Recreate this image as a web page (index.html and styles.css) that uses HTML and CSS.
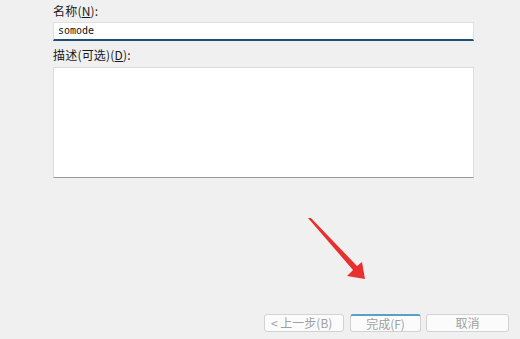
FILE: index.html
```html
<!DOCTYPE html>
<html lang="zh">
<head>
<meta charset="utf-8">
<link rel="stylesheet" href="styles.css">
</head>
<body>
<div class="page">
  <div class="form">
    <label class="label">名称(<u>N</u>):</label>
    <div class="input">somode</div>
    <label class="label label2">描述(可选)(<u>D</u>):</label>
    <div class="textarea"></div>
  </div>
  <svg class="arrow" width="80" height="80" viewBox="0 0 80 80">
    <polygon points="0,0 45,52 39,58 57,61 54,44 49,48 2,-1" fill="#e8302e"/>
  </svg>
  <div class="buttons">
    <div class="btn b1">&lt; 上一步(<u>B</u>)</div>
    <div class="btn b2 primary">完成(<u>F</u>)</div>
    <div class="btn b3">取消</div>
  </div>
</div>
</body>
</html>
```
FILE: styles.css
```css
html, body {
  margin: 0;
  padding: 0;
  background: #f0f0f0;
}
body {
  width: 520px;
  height: 339px;
  overflow: hidden;
  font-family: "Noto Sans CJK SC", "Noto Sans", sans-serif;
  color: #1a1a1a;
}
.page {
  position: relative;
  width: 520px;
  height: 339px;
}
.form {
  padding: 2px 0 0 53px;
  width: 421px;
  display: flex;
  flex-direction: column;
}
.label {
  font-size: 12px;
  line-height: 17px;
  height: 17px;
  letter-spacing: 0.2px;
}
.label u {
  text-decoration-thickness: 1px;
  text-underline-offset: 1px;
}
.input {
  margin-top: 3px;
  height: 16px;
  background: #fff;
  border: 1px solid #e0e0e0;
  border-bottom: 2px solid #1d4e78;
  font-family: "DejaVu Sans Mono", monospace;
  font-size: 10px;
  line-height: 16px;
  padding-left: 4px;
  color: #111;
}
.label2 {
  margin-top: 5px;
}
.textarea {
  margin-top: 4px;
  height: 109px;
  background: #fff;
  border: 1px solid #dcdcdc;
  border-bottom: 1px solid #9a9a9a;
}
.arrow {
  position: absolute;
  left: 308px;
  top: 218px;
}
.buttons {
  position: absolute;
  left: 264px;
  top: 314px;
  display: flex;
  gap: 6px;
}
.btn {
  height: 18px;
  box-sizing: border-box;
  border: 1px solid #d2d2d2;
  border-radius: 3px;
  background: #fbfbfb;
  font-size: 12px;
  line-height: 16px;
  color: #a0a0a0;
  text-align: center;
}
.btn u { text-decoration: none; }
.b1 { width: 80px; text-align: left; padding-left: 6px; }
.b2 { width: 71px; }
.b3 { width: 83px; margin-left: -1px; }
.primary {
  border-top: 2px solid #5a9fc8;
  line-height: 15px;
}
```
